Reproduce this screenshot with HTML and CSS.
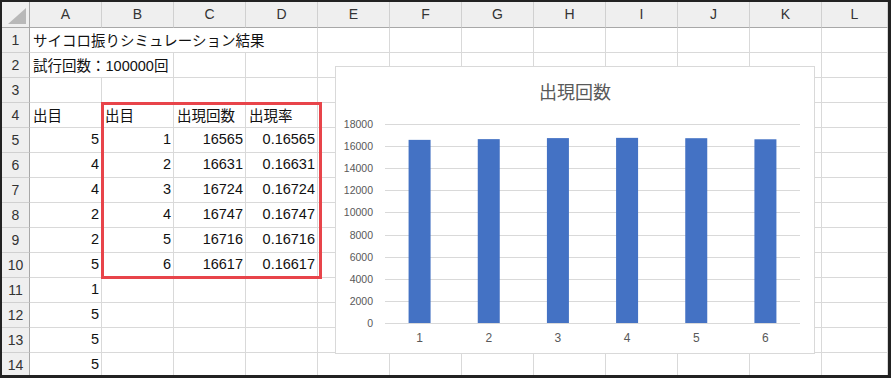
FILE: index.html
```html
<!DOCTYPE html>
<html lang="ja">
<head>
  <meta charset="UTF-8">
  <meta name="viewport" content="width=device-width, initial-scale=1.0">
  <title>サイコロ振りシミュレーション結果</title>
  <link rel="stylesheet" href="styles.css">
</head>
<body>
  <div class="sheet">
    <!-- Spreadsheet grid (filled by script) -->
    <div class="grid" id="grid"></div>

    <!-- Red box around the summary table -->
    <div class="highlight"></div>

    <!-- Column chart -->
    <div class="chart">
      <svg id="chartSvg" width="478" height="286" viewBox="0 0 478 286">
        <text class="chart-title" x="239" y="32" text-anchor="middle">出現回数</text>
      </svg>
    </div>
  </div>

  <script>
    const columns = ["A", "B", "C", "D", "E", "F", "G", "H", "I", "J", "K", "L"];
    const dice = [5, 4, 4, 2, 2, 5, 1, 5, 5, 5];
    const counts = [16565, 16631, 16724, 16747, 16716, 16617];
    const trials = 100000;
    const rowCount = 14;

    const grid = document.getElementById("grid");

    function addCell(text, classes) {
      const cell = document.createElement("div");
      cell.className = "cell " + (classes || "");
      cell.textContent = text === undefined ? "" : text;
      grid.appendChild(cell);
    }

    // Sheet contents by row number
    const rows = {
      1: [{ text: "サイコロ振りシミュレーション結果", span: 4 }],
      2: [{ text: "試行回数：" + trials + "回", span: 2 }],
      4: [{ text: "出目" }, { text: "出目" }, { text: "出現回数" }, { text: "出現率" }]
    };

    dice.forEach((d, i) => {
      const r = i + 5;
      rows[r] = [{ text: d, num: true }];
      if (i < counts.length) {
        rows[r].push(
          { text: i + 1, num: true },
          { text: counts[i], num: true },
          { text: counts[i] / trials, num: true }
        );
      }
    });

    // Header row
    addCell("", "corner");
    columns.forEach(c => addCell(c, "col-head"));

    // Body rows
    for (let r = 1; r <= rowCount; r++) {
      addCell(r, "row-head");
      let col = 0;
      (rows[r] || []).forEach(item => {
        const span = item.span || 1;
        let cls = item.num ? "num" : "";
        if (span > 1) cls += " span-" + span;
        addCell(item.text, cls);
        col += span;
      });
      while (col < columns.length) {
        addCell("", "");
        col++;
      }
    }

    // Chart
    const svgNS = "http://www.w3.org/2000/svg";
    const svg = document.getElementById("chartSvg");
    const plot = { left: 49, right: 464, bottom: 256, height: 199, max: 18000, step: 2000 };

    function make(tag, attrs, text) {
      const el = document.createElementNS(svgNS, tag);
      Object.keys(attrs).forEach(k => el.setAttribute(k, attrs[k]));
      if (text !== undefined) el.textContent = text;
      svg.appendChild(el);
      return el;
    }

    for (let v = 0; v <= plot.max; v += plot.step) {
      const y = Math.round(plot.bottom - v / plot.max * plot.height) + 0.5;
      make("line", { class: "gridline", x1: plot.left, x2: plot.right, y1: y, y2: y });
      make("text", { class: "axis-label", x: 37, y: y + 3.5, "text-anchor": "end" }, v);
    }

    const slot = (plot.right - plot.left) / counts.length;
    counts.forEach((count, i) => {
      const center = plot.left + slot * (i + 0.5);
      const h = count / plot.max * plot.height;
      make("rect", { class: "bar", x: center - 11, y: plot.bottom - h, width: 22, height: h });
      make("text", { class: "axis-label category", x: center, y: 275, "text-anchor": "middle" }, i + 1);
    });
  </script>
</body>
</html>
```

FILE: styles.css
```css
body {
  margin: 0;
  padding: 2px 3px 3px 2px;
  background-color: #222;
  font-family: "Liberation Sans", "Noto Sans CJK JP", sans-serif;
}

.sheet {
  position: relative;
  height: 373px;
  overflow: hidden;
  background-color: #fff;
}

.grid {
  display: grid;
  grid-template-columns: 28px repeat(11, 72px) 1fr;
  grid-template-rows: 26px;
  grid-auto-rows: 25px;
}

.cell {
  box-sizing: border-box;
  display: flex;
  align-items: center;
  padding: 0 2px 2px 3px;
  border-right: 1px solid #d9d9d9;
  border-bottom: 1px solid #d9d9d9;
  font-size: 14.5px;
  color: #111;
  white-space: nowrap;
}

.cell.num {
  justify-content: flex-end;
}

.span-2 {
  grid-column: span 2;
}

.span-4 {
  grid-column: span 4;
}

.col-head,
.row-head,
.corner {
  background-color: #efefef;
  justify-content: center;
  padding: 0 0 1px;
  font-size: 14px;
  color: #333;
}

.col-head {
  border-right-color: #d0d0d0;
  border-bottom-color: #a8a8a8;
}

.row-head {
  border-right-color: #a8a8a8;
  border-bottom-color: #d0d0d0;
}

.corner {
  position: relative;
  border-right-color: #a8a8a8;
  border-bottom-color: #a8a8a8;
}

.corner::after {
  content: "";
  position: absolute;
  right: 3px;
  bottom: 3px;
  width: 18px;
  height: 16px;
  background-color: #b8b8b8;
  clip-path: polygon(100% 0, 100% 100%, 0 100%);
}

.highlight {
  position: absolute;
  left: 99px;
  top: 100px;
  width: 221px;
  height: 177px;
  box-sizing: border-box;
  border: 3px solid #e8444a;
}

.chart {
  position: absolute;
  left: 333px;
  top: 64px;
  width: 480px;
  height: 288px;
  box-sizing: border-box;
  border: 1px solid #d9d9d9;
  background-color: #fff;
}

.chart svg {
  display: block;
}

.chart-title {
  font-family: "Noto Sans CJK JP", sans-serif;
  font-size: 18px;
  fill: #595959;
}

.gridline {
  stroke: #d9d9d9;
  stroke-width: 1;
}

.axis-label {
  font-family: "Liberation Sans", sans-serif;
  font-size: 10.5px;
  fill: #595959;
}

.axis-label.category {
  font-size: 12px;
}

.bar {
  fill: #4472c4;
}
```
